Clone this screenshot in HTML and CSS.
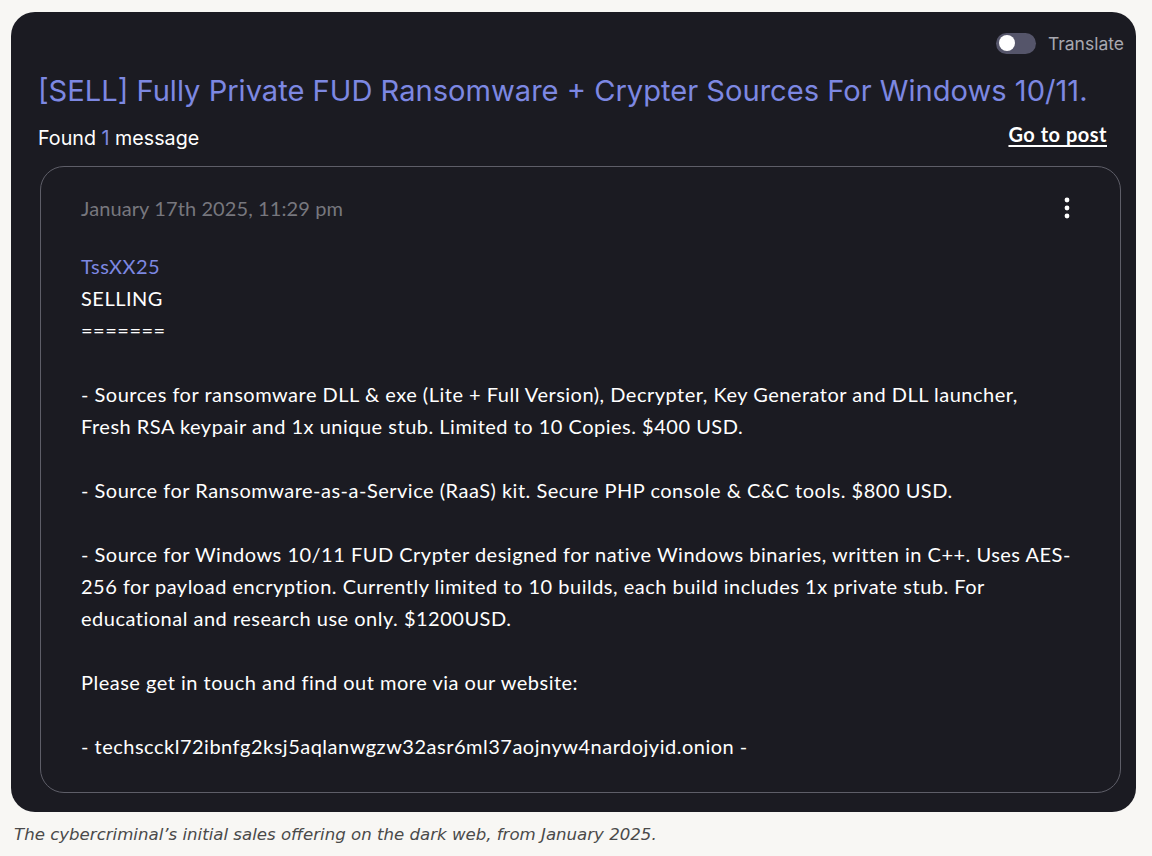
FILE: index.html
```html
<!DOCTYPE html>
<html lang="en">
<head>
    <meta charset="UTF-8">
    <title>Found message</title>
    <link rel="stylesheet" href="styles.css">
</head>
<body>
    <div class="panel">
        <!-- toggle traduzione -->
        <div class="top-bar">
            <span class="toggle"><span class="knob"></span></span>
            <span class="toggle-label">Translate</span>
        </div>
        <h1 class="title">[SELL] Fully Private FUD Ransomware + Crypter Sources For Windows 10/11.</h1>
        <div class="found-row">
            <span class="found">Found <span class="count">1</span> message</span>
            <a class="go-post" href="#">Go to post</a>
        </div>

        <!-- messaggio -->
        <div class="message">
            <div class="msg-head">
                <span class="date">January 17th 2025, 11:29 pm</span>
                <svg class="kebab" width="6" height="22" viewBox="0 0 6 22"><circle cx="3" cy="3" r="2.4" fill="#fff"/><circle cx="3" cy="11" r="2.4" fill="#fff"/><circle cx="3" cy="19" r="2.4" fill="#fff"/></svg>
            </div>
            <div class="author">TssXX25</div>
            <div class="body">SELLING
=======

- Sources for ransomware DLL &amp; exe (Lite + Full Version), Decrypter, Key Generator and DLL launcher,<br>Fresh RSA keypair and 1x unique stub. Limited to 10 Copies. $400 USD.

- Source for Ransomware-as-a-Service (RaaS) kit. Secure PHP console &amp; C&amp;C tools. $800 USD.

- Source for Windows 10/11 FUD Crypter designed for native Windows binaries, written in C++. Uses AES-<wbr>256 for payload encryption. Currently limited to 10 builds, each build includes 1x private stub. For educational and research use only. $1200USD.

Please get in touch and find out more via our website:

- techscckl72ibnfg2ksj5aqlanwgzw32asr6ml37aojnyw4nardojyid.onion -</div>
        </div>
    </div>
    <p class="caption">The cybercriminal’s initial sales offering on the dark web, from January 2025.</p>
</body>
</html>
```

FILE: styles.css
```css
body {
    margin: 0;
    background-color: #f8f7f4;
    font-family: "Lato", "Liberation Sans", sans-serif;
}

.panel {
    margin: 12px 16px 0 11px;
    background-color: #1b1b22;
    border-radius: 24px;
    padding: 20px 12px 19px 27px;
}

.top-bar {
    display: flex;
    justify-content: flex-end;
    align-items: center;
    gap: 12px;
    height: 22px;
}

.toggle {
    width: 40px;
    height: 21px;
    border-radius: 11px;
    background-color: #55556a;
    display: flex;
    align-items: center;
    padding-left: 3px;
    box-sizing: border-box;
}

.knob {
    width: 16px;
    height: 16px;
    border-radius: 50%;
    background-color: #fff;
}

.toggle-label {
    color: #a8a8b0;
    font-family: "Inter", sans-serif;
    font-size: 17.5px;
}

.title {
    margin: 19px 0 0 0;
    font-family: "Inter", sans-serif;
    font-weight: 400;
    font-size: 29.1px;
    line-height: 36px;
    color: #7d88e2;
}

.found-row {
    display: flex;
    justify-content: space-between;
    align-items: flex-end;
    margin-top: 11px;
    padding-right: 17px;
}

.found {
    color: #fff;
    font-family: "Inter", sans-serif;
    font-size: 19.7px;
    margin-top: 6px;
}

.count {
    color: #7d88e2;
}

.go-post {
    color: #fff;
    font-weight: 700;
    font-size: 20px;
    letter-spacing: 0.5px;
    text-decoration: underline;
    text-underline-offset: 3px;
    margin-bottom: 4px;
}

.message {
    margin: 16px 3px 0 2px;
    border: 1.5px solid #5e5e68;
    border-radius: 24px;
    padding: 28px 40px 30px 40px;
}

.msg-head {
    display: flex;
    justify-content: space-between;
    align-items: flex-start;
}

.date {
    color: #77777e;
    font-size: 20px;
    letter-spacing: 0.1px;
    line-height: 26px;
}

.kebab {
    margin-top: 2px;
    margin-right: 10px;
}

.author {
    margin-top: 29px;
    color: #7d88e2;
    font-size: 20px;
    letter-spacing: 0.5px;
    line-height: 32px;
}

.body {
    white-space: pre-wrap;
    color: #fff;
    font-size: 20px;
    letter-spacing: 0.5px;
    line-height: 32px;
}

.caption {
    margin: 13px 0 0 14px;
    font-family: "DejaVu Sans", sans-serif;
    font-style: italic;
    font-size: 16.6px;
    color: #4a4a4a;
}
```
